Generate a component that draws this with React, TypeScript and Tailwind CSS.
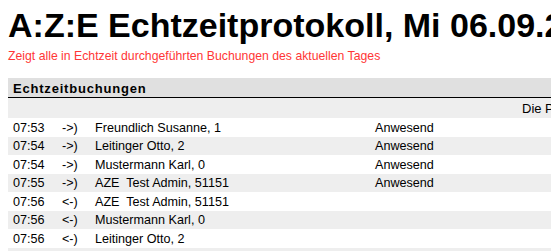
import React from "react";

const rows: [string, string, string, string][] = [
  ["07:53", "->)", "Freundlich Susanne, 1", "Anwesend"],
  ["07:54", "->)", "Leitinger Otto, 2", "Anwesend"],
  ["07:54", "->)", "Mustermann Karl, 0", "Anwesend"],
  ["07:55", "->)", "AZE  Test Admin, 51151", "Anwesend"],
  ["07:56", "<-)", "AZE  Test Admin, 51151", ""],
  ["07:56", "<-)", "Mustermann Karl, 0", ""],
  ["07:56", "<-)", "Leitinger Otto, 2", ""],
  ["07:57", "->)", "Freundlich Susanne, 1", ""],
];

export default function App() {
  return (
    <div className="w-[551px] h-[251px] overflow-hidden bg-white font-['Liberation_Sans',Arial,sans-serif]">
      <div className="w-[800px] px-2">
        <h1 className="pt-[6px] text-[34px] leading-[38px] font-bold text-black whitespace-nowrap">
          A:Z:E Echtzeitprotokoll, Mi 06.09.2017
        </h1>
        <p className="mt-[5px] text-[12.25px] leading-[15px] text-[#ff3636] whitespace-nowrap">
          Zeigt alle in Echtzeit durchgeführten Buchungen des aktuellen Tages
        </p>
        <div className="mt-[14px]">
          <div className="h-[20px] bg-[#e0e0e0] border-b border-black pl-[5px] pt-[3px] text-[13px] leading-[15px] font-bold tracking-[0.8px] text-black">
            Echtzeitbuchungen
          </div>
          <div className="h-[20px] bg-[#eeeeee] pl-[514px] pt-[3px] text-[13px] leading-[15px] text-black whitespace-nowrap">
            Die Protokollierung erfolgt in Echtzeit
          </div>
          {rows.map((r, i) => (
            <div
              key={i}
              className={`flex h-[18.5px] items-center pt-[2px] text-[12.6px] leading-[15px] text-black whitespace-pre ${
                i % 2 === 1 ? "bg-[#eeeeee]" : "bg-white"
              }`}
            >
              <div className="w-[54px] pl-[5px]">{r[0]}</div>
              <div className="w-[33px]">{r[1]}</div>
              <div className="w-[280px]">{r[2]}</div>
              <div>{r[3]}</div>
            </div>
          ))}
        </div>
      </div>
    </div>
  );
}
